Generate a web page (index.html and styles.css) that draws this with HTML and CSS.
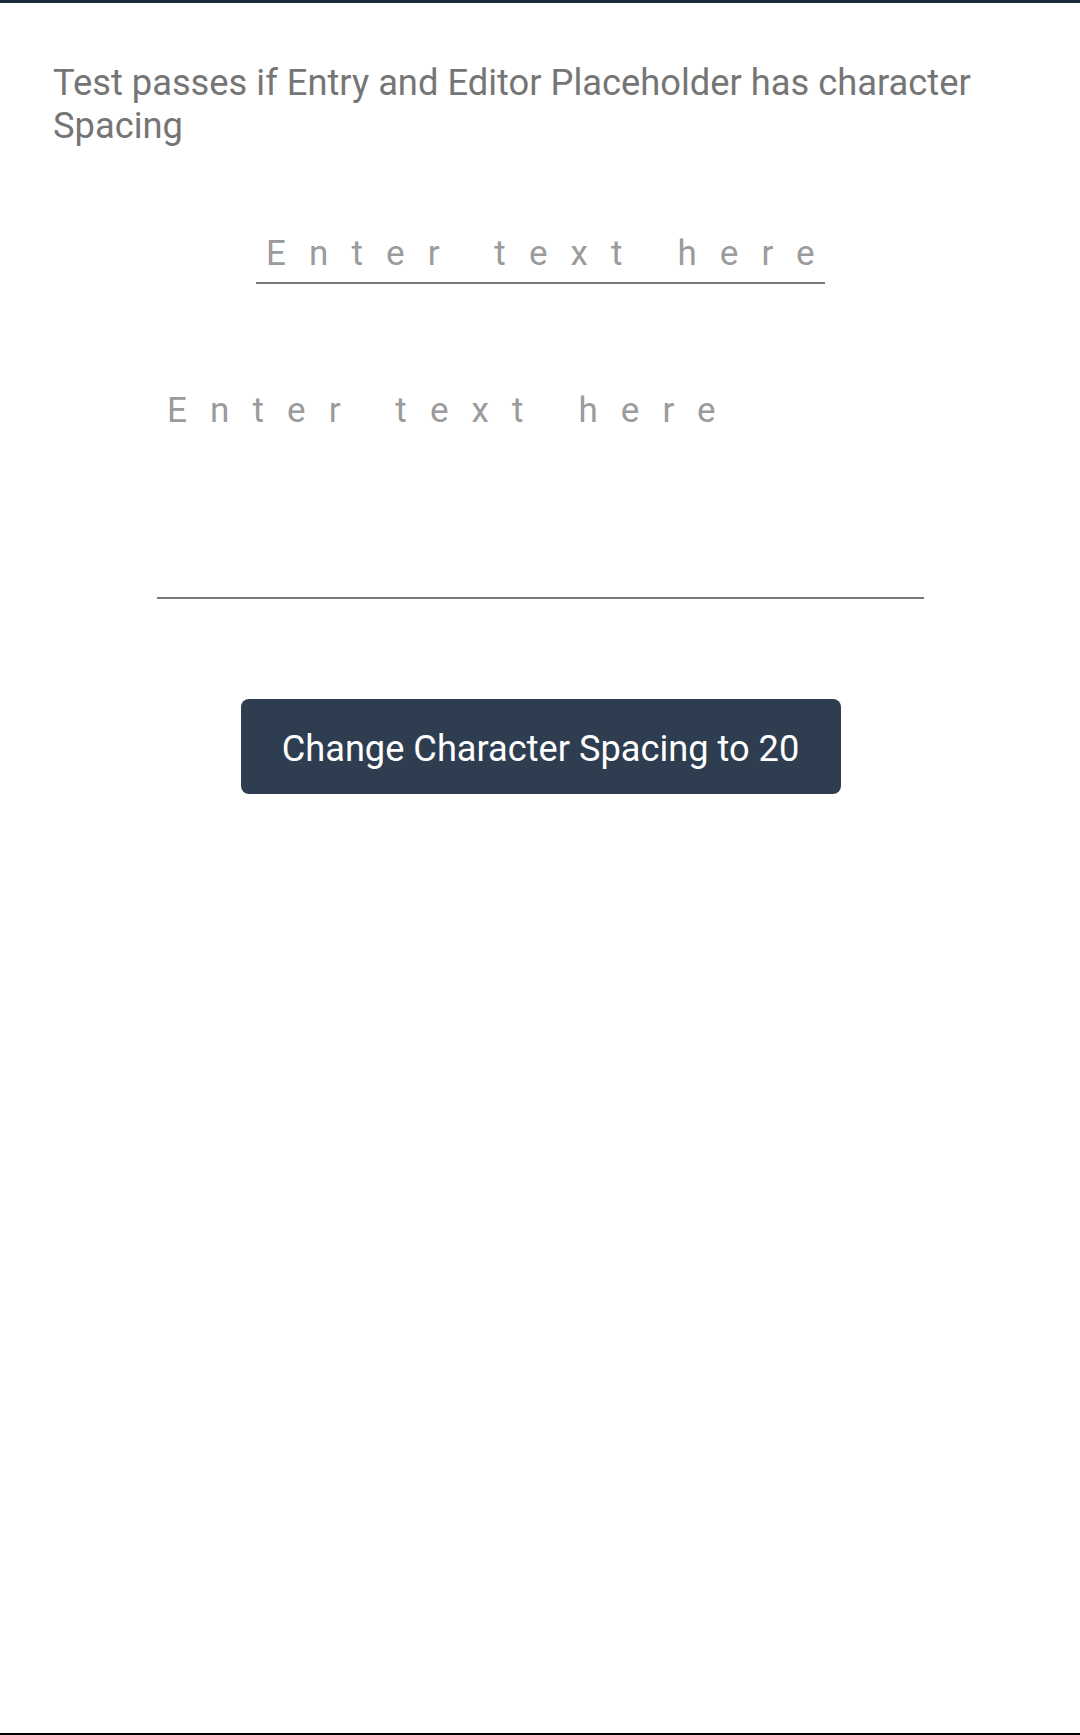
FILE: index.html
```html
<!DOCTYPE html>
<html>
<head>
<meta charset="utf-8">
<link rel="stylesheet" href="styles.css">
</head>
<body>
<div class="page">
  <div class="topbar"></div>
  <p class="title">Test passes if Entry and Editor Placeholder has character Spacing</p>
  <div class="entry"><span class="placeholder">Enter text here</span></div>
  <div class="editor"><span class="placeholder">Enter text here</span></div>
  <button class="btn">Change Character Spacing to 20</button>
  <div class="bottombar"></div>
</div>
</body>
</html>
```
FILE: styles.css
```css
html, body {
  margin: 0;
  padding: 0;
  background: #ffffff;
}
.page {
  height: 1735px;
  display: flex;
  flex-direction: column;
  align-items: center;
  font-family: Roboto, "Noto Sans", sans-serif;
}
.topbar {
  align-self: stretch;
  height: 3px;
  background: #1c2b40;
}
.title {
  align-self: stretch;
  margin: 58px 0 0 0;
  padding: 0 53px;
  font-size: 36.3px;
  line-height: 43px;
  color: #757575;
}
.placeholder {
  font-size: 35px;
  line-height: 41px;
  letter-spacing: 23.1px;
  color: #9b9b9b;
  white-space: nowrap;
}
.entry {
  width: 569px;
  box-sizing: border-box;
  margin-top: 86px;
  padding: 0 0 8px 10.5px;
  height: 51px;
  border-bottom: 2px solid #787878;
  line-height: 41px;
}
.editor {
  width: 767px;
  box-sizing: border-box;
  margin-top: 105.5px;
  padding: 0 0 0 10.5px;
  height: 209.5px;
  border-bottom: 2px solid #787878;
  line-height: 41px;
}
.btn {
  margin: 100px 0 0 1px;
  width: 600px;
  height: 95px;
  border: none;
  border-radius: 8px;
  background: #2e3e50;
  color: #ffffff;
  font-family: Roboto, "Noto Sans", sans-serif;
  font-size: 36.2px;
  padding: 4px 0 0 0;
}
.bottombar {
  margin-top: auto;
  align-self: stretch;
  height: 2px;
  background: #000000;
}
```
